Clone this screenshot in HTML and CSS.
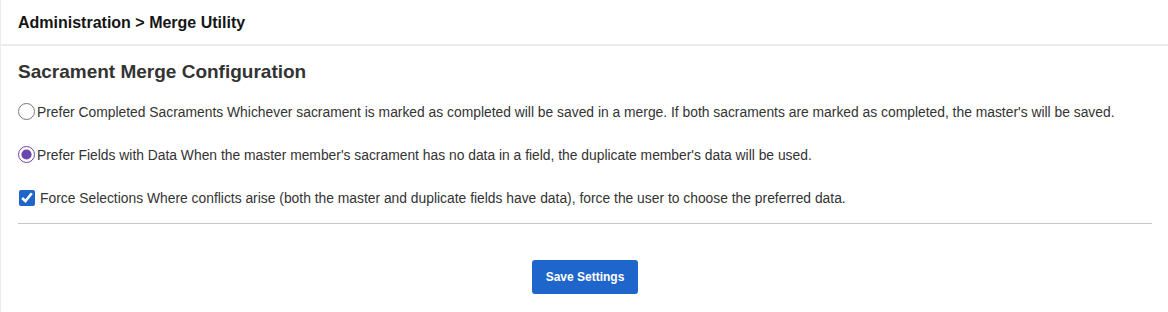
FILE: index.html
```html
<!DOCTYPE html>
<html lang="en">
<head>
    <meta charset="UTF-8">
    <meta name="viewport" content="width=device-width, initial-scale=1.0">
    <title>Merge Utility</title>
    <link rel="stylesheet" href="styles.css">
</head>
<body>
    <div class="page">
        <div class="page-header">
            <h1 class="breadcrumb">Administration &gt; Merge Utility</h1>
        </div>
        <div class="page-body">
            <h2 class="section-title">Sacrament Merge Configuration</h2>
            <div class="options">
                <label class="option">
                    <input type="radio" name="mergeMode" value="completed">
                    <span>Prefer Completed Sacraments Whichever sacrament is marked as completed will be saved in a merge. If both sacraments are marked as completed, the master's will be saved.</span>
                </label>
                <label class="option">
                    <input type="radio" name="mergeMode" value="fields" checked>
                    <span>Prefer Fields with Data When the master member's sacrament has no data in a field, the duplicate member's data will be used.</span>
                </label>
                <label class="option option-check">
                    <input type="checkbox" name="forceSelections" checked>
                    <span>Force Selections Where conflicts arise (both the master and duplicate fields have data), force the user to choose the preferred data.</span>
                </label>
            </div>
            <div class="actions">
                <button class="btn-save">Save Settings</button>
            </div>
        </div>
    </div>
</body>
</html>
```

FILE: styles.css
```css
* {
    margin: 0;
    padding: 0;
    box-sizing: border-box;
}

body {
    font-family: "Liberation Sans", Arial, sans-serif;
    background: #fff;
    color: #151515;
}

.page {
    height: 100vh;
    border-left: 1px solid #ececec;
}

.page-header {
    height: 46px;
    padding: 2px 17px 0;
    display: flex;
    align-items: center;
    border-bottom: 2px solid #ececec;
}

.breadcrumb {
    font-size: 16px;
    font-weight: bold;
    color: #151515;
}

.page-body {
    padding: 0 16px 0 17px;
}

.section-title {
    font-size: 19px;
    font-weight: bold;
    color: #333;
    margin-top: 15px;
    height: 22px;
    line-height: 22px;
}

.options {
    margin-top: 7px;
    padding-bottom: 4px;
    border-bottom: 1px solid #c7c7c7;
}

.option {
    display: flex;
    align-items: center;
    height: 43px;
    font-size: 13.85px;
    color: #333;
}

.option input[type="radio"] {
    width: 17px;
    height: 17px;
    margin: 0 2px 0 0;
    accent-color: #6d44ad;
}

.option input[type="checkbox"] {
    width: 16px;
    height: 16px;
    margin: 1px 5px 0 1px;
    accent-color: #1f66cc;
}

.actions {
    display: flex;
    justify-content: center;
    padding-top: 36px;
}

.btn-save {
    width: 106px;
    height: 34px;
    background: #1f66cc;
    color: #fff;
    border: none;
    border-radius: 3px;
    font-family: inherit;
    font-size: 12px;
    font-weight: bold;
    cursor: pointer;
}

.btn-save:hover {
    background: #1a57b0;
}
```
